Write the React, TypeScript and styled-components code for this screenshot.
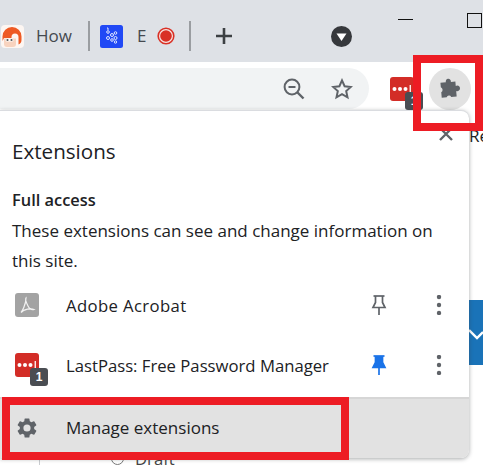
import React from "react";
import styled, { createGlobalStyle } from "styled-components";

const Global = createGlobalStyle`
  html, body { margin: 0; padding: 0; background: #fff; }
  body { font-family: "Open Sans", "Noto Sans", "Liberation Sans", sans-serif; color: #202124; }
  * { box-sizing: border-box; }
`;

const Page = styled.div`
  position: relative;
  width: 483px;
  height: 465px;
  overflow: hidden;
  background: #fff;
`;

const TabStrip = styled.div`
  height: 62px;
  background: #dee1e6;
  display: flex;
  align-items: center;
  padding: 10px 0 0 1px;
`;

const TabIcon = styled.span`
  width: 23px;
  height: 23px;
  flex: none;
  display: block;
  line-height: 0;
`;

const TabTitle = styled.span<{ $width: number; $left: number }>`
  width: ${(p) => p.$width}px;
  margin-left: ${(p) => p.$left}px;
  font-size: 17px;
  line-height: 24px;
  color: #45494f;
  overflow: hidden;
  white-space: nowrap;
  flex: none;
`;

const Separator = styled.span<{ $left: number }>`
  width: 2px;
  height: 30px;
  margin-left: ${(p) => p.$left}px;
  background: #9a9da1;
  flex: none;
`;

const IconSlot = styled.span<{ $left: number }>`
  margin-left: ${(p) => p.$left}px;
  flex: none;
  display: block;
  line-height: 0;
`;

const WindowButtons = styled.div`
  margin-left: 46px;
  display: flex;
  align-items: flex-start;
  align-self: stretch;
  margin-top: -10px;
  flex: none;
`;

const Minimize = styled.span`
  width: 15px;
  height: 1px;
  margin-top: 19px;
  background: #111;
  display: block;
`;

const Maximize = styled.span`
  width: 15px;
  height: 15px;
  margin-left: 54px;
  margin-top: 13px;
  border: 1px solid #111;
  display: block;
`;

const Toolbar = styled.div`
  height: 48px;
  padding-top: 6px;
  display: flex;
  align-items: flex-start;
  background: #fff;
`;

const Omnibox = styled.div`
  width: 369px;
  height: 41px;
  background: #f1f3f4;
  border-radius: 0 21px 21px 0;
  display: flex;
  align-items: center;
  padding-left: 283px;
  gap: 26px;
  flex: none;
`;

const ActionExt = styled.div`
  position: relative;
  width: 24px;
  height: 24px;
  margin: 9px 0 0 21px;
  flex: none;
`;

const ExtCircle = styled.div`
  width: 42px;
  height: 42px;
  margin: 0 0 0 15px;
  border-radius: 50%;
  background: #e2e2e2;
  display: flex;
  align-items: center;
  justify-content: center;
  flex: none;
`;

const Tile = styled.span<{ $color: string }>`
  width: 24px;
  height: 24px;
  border-radius: 3px;
  background: ${(p) => p.$color};
  display: flex;
  align-items: center;
  justify-content: center;
  line-height: 0;
`;

const Badge = styled.span`
  position: absolute;
  left: 15px;
  top: 15px;
  width: 18px;
  height: 18px;
  border-radius: 3px;
  background: #4a4d52;
  color: #fff;
  font: 700 12px/18px "Liberation Sans", sans-serif;
  text-align: center;
`;

const Body = styled.div`
  display: flex;
  height: 348px;
`;

const Popup = styled.div`
  width: 469px;
  height: 348px;
  flex: none;
  background: #fff;
  border-radius: 0 8px 8px 0;
  border-top: 1px solid #dadce0;
  box-shadow: 0 1px 4px rgba(60, 64, 67, 0.45);
  display: flex;
  flex-direction: column;
  position: relative;
  z-index: 1;
`;

const Header = styled.div`
  height: 59px;
  padding: 0 16px 0 12px;
  display: flex;
  justify-content: space-between;
  align-items: flex-start;
`;

const Title = styled.h1`
  margin: 25px 0 0;
  font-size: 20.6px;
  line-height: 30px;
  font-weight: 400;
  color: #202124;
`;

const Close = styled.span`
  margin-top: 16px;
  line-height: 0;
  display: block;
`;

const Access = styled.section`
  padding: 0 12px;
  height: 105px;
`;

const AccessTitle = styled.h2`
  margin: 15px 0 0;
  font-size: 16.4px;
  line-height: 30px;
  font-weight: 600;
  color: #202124;
`;

const AccessText = styled.p`
  margin: 1px 0 0;
  width: 445px;
  font-size: 17px;
  line-height: 30px;
  color: #202124;
`;

const Row = styled.div`
  height: 60px;
  display: flex;
  align-items: center;
  padding-left: 15px;
`;

const RowIcon = styled.div`
  position: relative;
  width: 24px;
  height: 24px;
  flex: none;
`;

const RowName = styled.span<{ $spacing?: number }>`
  margin-left: 27px;
  font-size: 16.7px;
  letter-spacing: ${(p) => p.$spacing ?? 0}px;
  color: #202124;
  white-space: nowrap;
  width: 303px;
  flex: none;
`;

const PinSlot = styled.span`
  width: 20px;
  flex: none;
  line-height: 0;
  display: block;
`;

const Dots = styled.span`
  margin-left: 47px;
  flex: none;
  line-height: 0;
  display: block;
`;

const Footer = styled.div`
  margin-top: auto;
  height: 61px;
  background: #e2e2e2;
  border-top: 2px solid #d6d6d6;
  border-radius: 0 0 8px 0;
  display: flex;
  align-items: center;
  padding: 0 0 2px 15px;
`;

const FooterLabel = styled.span`
  margin-left: 27px;
  font-size: 17px;
  color: #202124;
`;

const Side = styled.div`
  flex: 1;
  min-width: 0;
  overflow: hidden;
`;

const SideLabel = styled.div`
  margin-top: 15px;
  font-size: 17px;
  line-height: 22px;
  color: #202124;
  white-space: nowrap;
`;

const BlueButton = styled.div`
  margin-top: 153px;
  height: 65px;
  background: #1a73b8;
  line-height: 0;
`;

const Below = styled.div`
  height: 7px;
  display: flex;
  align-items: flex-start;
  padding-left: 39px;
  overflow: hidden;
`;

const BelowRule = styled.span`
  width: 1px;
  height: 7px;
  background: #c9ccd0;
  flex: none;
`;

const Radio = styled.span`
  width: 13px;
  height: 13px;
  margin: -6px 0 0 71px;
  border: 1px solid #777;
  border-radius: 50%;
  flex: none;
`;

const Draft = styled.span`
  margin: -9px 0 0 11px;
  font-size: 16.7px;
  line-height: 20px;
  color: #444;
`;

const Highlight = styled.div<{ $l: number; $t: number; $w: number; $h: number }>`
  position: absolute;
  left: ${(p) => p.$l}px;
  top: ${(p) => p.$t}px;
  width: ${(p) => p.$w}px;
  height: ${(p) => p.$h}px;
  border: 8px solid #ed1c24;
  z-index: 5;
`;

const gear =
  "M19.14 12.94c.04-.3.06-.61.06-.94s-.02-.64-.07-.94l2.03-1.58a.49.49 0 0 0 .12-.61l-1.92-3.32a.49.49 0 0 0-.59-.22l-2.39.96a7.03 7.03 0 0 0-1.62-.94l-.36-2.54a.48.48 0 0 0-.48-.41h-3.84a.48.48 0 0 0-.47.41l-.36 2.54c-.59.24-1.13.57-1.62.94l-2.39-.96a.49.49 0 0 0-.59.22L2.74 8.87a.48.48 0 0 0 .12.61l2.03 1.58c-.05.3-.09.63-.09.94s.02.64.07.94l-2.03 1.58a.49.49 0 0 0-.12.61l1.92 3.32c.12.22.37.29.59.22l2.39-.96c.5.38 1.03.7 1.62.94l.36 2.54c.05.24.24.41.48.41h3.84c.24 0 .44-.17.47-.41l.36-2.54c.59-.24 1.13-.56 1.62-.94l2.39.96c.22.08.47 0 .59-.22l1.92-3.32a.48.48 0 0 0-.12-.61l-2.01-1.58zM12 15.6A3.6 3.6 0 1 1 12 8.4a3.6 3.6 0 0 1 0 7.2z";

const MaskFavicon = () => (
  <svg width="23" height="23" viewBox="0 0 23 23">
    <rect width="23" height="23" rx="4" fill="#fdf6f2" />
    <path d="M1.5 16V11.5a9.5 9.5 0 0 1 19 0V15c0 2-1 3.5-3 4.5V12a3.5 3.5 0 0 0-7 0v1H3z" fill="#ee5a24" />
    <path d="M3 13.5h12V19a3 3 0 0 1-3 3H6a3 3 0 0 1-3-3z" fill="#f8d3bf" />
    <rect x="4.5" y="13.5" width="8" height="3" rx="1.5" fill="#fff" />
    <circle cx="6.5" cy="15" r="1.1" fill="#555" />
    <circle cx="10.5" cy="15" r="1.1" fill="#555" />
  </svg>
);

const NetFavicon = () => (
  <svg width="23" height="23" viewBox="0 0 23 23">
    <rect width="23" height="23" rx="2.5" fill="#2149f5" />
    <g fill="none" stroke="#dfe6ff" strokeWidth="1">
      <circle cx="8" cy="7" r="1.3" />
      <circle cx="8" cy="13" r="1.5" />
      <circle cx="12" cy="10" r="1.5" />
      <circle cx="15.5" cy="8" r="1.3" />
      <circle cx="12" cy="15" r="1.3" />
      <circle cx="15.5" cy="13" r="1.5" />
      <circle cx="15.5" cy="17" r="1.2" />
      <path d="M8 5V3h-1" />
    </g>
  </svg>
);

const Record = () => (
  <svg width="18" height="18" viewBox="0 0 18 18">
    <circle cx="9" cy="9" r="8.6" fill="#d93025" />
    <circle cx="9" cy="9" r="7" fill="#f7e5e3" />
    <circle cx="9" cy="9" r="5.8" fill="#d93025" />
  </svg>
);

const Plus = () => (
  <svg width="18" height="18" viewBox="0 0 18 18">
    <path d="M9 1v16M1 9h16" stroke="#3c4043" strokeWidth="2.6" />
  </svg>
);

const MediaBadge = () => (
  <svg width="21" height="21" viewBox="0 0 21 21">
    <circle cx="10.5" cy="10.5" r="10.5" fill="#36383c" />
    <path d="M5.5 7.5h10l-5 7.5z" fill="#fff" />
  </svg>
);

const ZoomOut = () => (
  <svg width="22" height="22" viewBox="0 0 22 22" fill="none" stroke="#5f6368" strokeWidth="2">
    <circle cx="9" cy="9" r="7.4" />
    <path d="M5.5 9h7" />
    <path d="M14.5 14.5l6 6" strokeWidth="2.4" />
  </svg>
);

const Star = () => (
  <svg width="22" height="22" viewBox="0 0 22 22" fill="none" stroke="#5f6368" strokeWidth="2">
    <path d="M11 2.4l2.6 5.8 6.3.7-4.7 4.2 1.3 6.2L11 16.2l-5.5 3.1 1.3-6.2-4.7-4.2 6.3-.7z" />
  </svg>
);

const LastPassGlyph = () => (
  <svg width="24" height="24" viewBox="0 0 24 24">
    <circle cx="4.5" cy="12" r="2" fill="#fff" />
    <circle cx="10" cy="12" r="2" fill="#fff" />
    <circle cx="15.5" cy="12" r="2" fill="#fff" />
    <rect x="19.6" y="8" width="1.3" height="8" fill="#fff" />
  </svg>
);

const AcrobatGlyph = () => (
  <svg width="24" height="24" viewBox="0 0 24 24" fill="none" stroke="#f2f2f2" strokeWidth="1.2">
    <path d="M11 5c-1 1 .5 5 2 8s4 4 6 3.5c-3-1.5-10-.5-13 3 1-1 5-8 5-14.5z" />
  </svg>
);

const Puzzle = () => (
  <svg width="24" height="24" viewBox="0 0 24 24" fill="#5f6368">
    <g transform="rotate(-5 12 12)">
      <path d="M3 5H8.5A2.6 2.6 0 1 1 13.5 5H18V9.5A2.8 2.8 0 1 1 18 14.5V20H12.5A2.4 2.4 0 0 0 8 20H3V14.5A2.8 2.8 0 0 0 3 9.5Z" />
    </g>
  </svg>
);

const Gear = () => (
  <svg width="24" height="24" viewBox="0 0 24 24" fill="#5f6368">
    <path d={gear} />
  </svg>
);

const CloseX = () => (
  <svg width="14" height="14" viewBox="0 0 14 14">
    <path d="M1 1l12 12M13 1L1 13" stroke="#5f6368" strokeWidth="2.4" />
  </svg>
);

const Pin = ({ filled }: { filled?: boolean }) => {
  const c = filled ? "#1a73e8" : "#5f6368";
  return (
    <svg width="20" height="20" viewBox="0 0 20 20" fill={filled ? c : "none"} stroke={c} strokeWidth="1.7">
      <path d="M4.5 1h11" />
      <path d="M6.5 1v6.5L4 12.5h12l-2.5-5V1" />
      <path d="M10 12.5V20" />
    </svg>
  );
};

const Kebab = () => (
  <svg width="6" height="20" viewBox="0 0 6 20" fill="#5f6368">
    <circle cx="3" cy="2" r="2.2" />
    <circle cx="3" cy="10" r="2.2" />
    <circle cx="3" cy="18" r="2.2" />
  </svg>
);

const Chevron = () => (
  <svg width="14" height="65" viewBox="0 0 14 65" fill="none" stroke="#fff" strokeWidth="2.4">
    <path d="M0 30l8 8 6-6" />
  </svg>
);

export default function App() {
  return (
    <Page>
      <Global />
      <TabStrip>
        <TabIcon><MaskFavicon /></TabIcon>
        <TabTitle $width={40} $left={12}>How</TabTitle>
        <Separator $left={12} />
        <IconSlot $left={10}><NetFavicon /></IconSlot>
        <TabTitle $width={9} $left={14}>E</TabTitle>
        <IconSlot $left={11}><Record /></IconSlot>
        <Separator $left={14} />
        <IconSlot $left={24}><Plus /></IconSlot>
        <IconSlot $left={98}><MediaBadge /></IconSlot>
        <WindowButtons>
          <Minimize />
          <Maximize />
        </WindowButtons>
      </TabStrip>
      <Toolbar>
        <Omnibox>
          <ZoomOut />
          <Star />
        </Omnibox>
        <ActionExt>
          <Tile $color="#d32d27"><LastPassGlyph /></Tile>
          <Badge>1</Badge>
        </ActionExt>
        <ExtCircle><Puzzle /></ExtCircle>
      </Toolbar>
      <Body>
        <Popup>
          <Header>
            <Title>Extensions</Title>
            <Close><CloseX /></Close>
          </Header>
          <Access>
            <AccessTitle>Full access</AccessTitle>
            <AccessText>These extensions can see and change information on this site.</AccessText>
          </Access>
          <Row>
            <RowIcon><Tile $color="#a3a3a3"><AcrobatGlyph /></Tile></RowIcon>
            <RowName $spacing={0.38}>Adobe Acrobat</RowName>
            <PinSlot><Pin /></PinSlot>
            <Dots><Kebab /></Dots>
          </Row>
          <Row>
            <RowIcon>
              <Tile $color="#d32d27"><LastPassGlyph /></Tile>
              <Badge>1</Badge>
            </RowIcon>
            <RowName>LastPass: Free Password Manager</RowName>
            <PinSlot><Pin filled /></PinSlot>
            <Dots><Kebab /></Dots>
          </Row>
          <Footer>
            <Gear />
            <FooterLabel>Manage extensions</FooterLabel>
          </Footer>
        </Popup>
        <Side>
          <SideLabel>Re</SideLabel>
          <BlueButton><Chevron /></BlueButton>
        </Side>
      </Body>
      <Below>
        <BelowRule />
        <Radio />
        <Draft>Draft</Draft>
      </Below>
      <Highlight $l={413} $t={55} $w={70} $h={76} />
      <Highlight $l={2} $t={397} $w={347} $h={63} />
    </Page>
  );
}
